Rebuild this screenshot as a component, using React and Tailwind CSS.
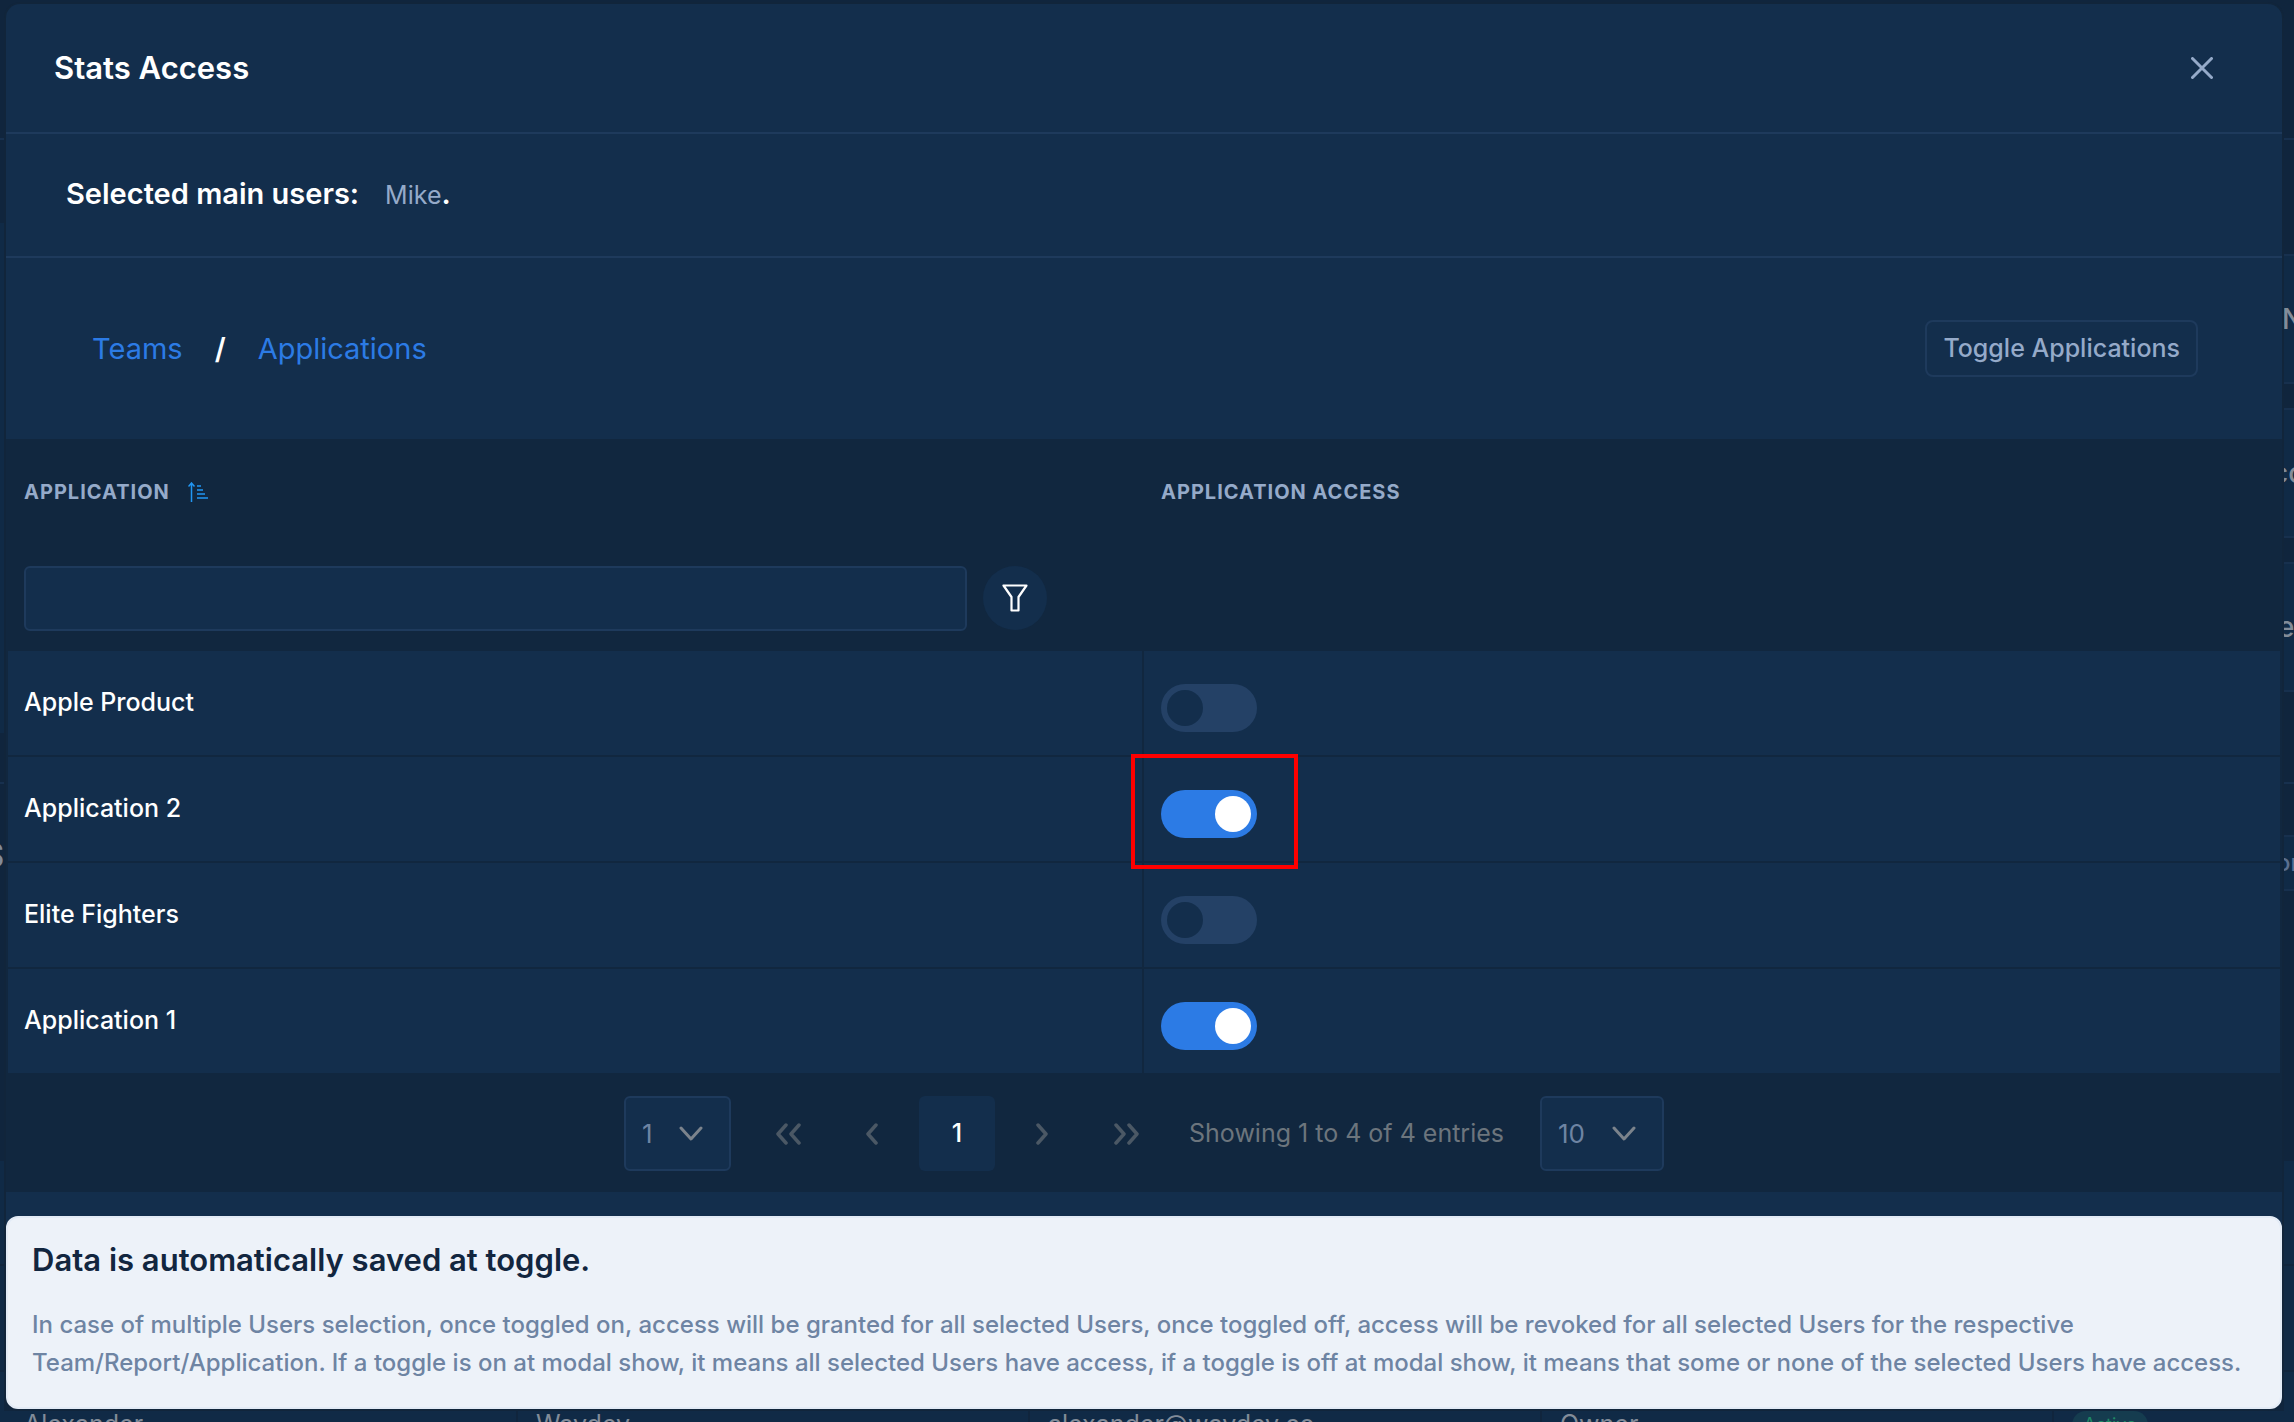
import React, { useState } from 'react';

const applications = [
  { name: 'Apple Product', access: false },
  { name: 'Application 2', access: true, highlighted: true },
  { name: 'Elite Fighters', access: false },
  { name: 'Application 1', access: true },
];

function SortIcon() {
  return (
    <svg width="20" height="20" viewBox="0 0 20 20" fill="none" stroke="#2196f3" strokeWidth="1.5">
      <path d="M3.500 20V1M0.500 4.500L3.500 1l3 3.500" />
      <path d="M9 4h4M9 8h6M9 12h8M9 16h11" />
    </svg>
  );
}

function FilterIcon() {
  return (
    <svg width="26" height="28" viewBox="0 0 26 28" fill="none" stroke="#fff" strokeWidth="2.200" strokeLinejoin="round">
      <path d="M1.500 1.500h23L16.500 13v13.500h-7V13z" />
    </svg>
  );
}

function Chevron({ direction, double }) {
  const d = direction === 'left' ? 'M10 2L2 11l8 9' : 'M2 2l8 9-8 9';
  return (
    <svg
      width={double ? 26 : 14}
      height="22"
      viewBox={double ? '0 0 26 22' : '0 0 14 22'}
      fill="none"
      stroke="#4b5865"
      strokeWidth="3.500"
      strokeLinecap="round"
      strokeLinejoin="round"
    >
      <path d={d} />
      {double && <path d={d} transform="translate(13 0)" />}
    </svg>
  );
}

function Switch({ label, checked, onChange }) {
  return (
    <input
      type="checkbox"
      role="switch"
      aria-label={label}
      checked={checked}
      onChange={onChange}
      className="block h-12 w-24 cursor-pointer appearance-none rounded-full bg-[#244166] p-1.5 before:block before:size-9 before:rounded-full before:bg-[#132e4c] checked:bg-[#2c7be5] checked:before:ml-12 checked:before:bg-white"
    />
  );
}

function PageSelect({ label, options, className }) {
  return (
    <div className="relative">
      <select
        aria-label={label}
        className={`h-[75px] appearance-none rounded-md border-2 border-[#1e3a5c] bg-[#132e4c] pl-4 text-[26px] text-[#6e84a3] ${className}`}
      >
        {options.map((option) => (
          <option key={option}>{option}</option>
        ))}
      </select>
      <svg
        className="pointer-events-none absolute top-7 right-7 h-5 w-6"
        viewBox="0 0 24 20"
        fill="none"
        stroke="#7b838c"
        strokeWidth="3"
        strokeLinecap="round"
        strokeLinejoin="round"
      >
        <path d="M2 4l10 11L22 4" />
      </svg>
    </div>
  );
}

// Dimmed users page that stays visible around the modal
function PageBehind() {
  return (
    <div aria-hidden="true" className="absolute inset-0 flex flex-col overflow-hidden bg-[#10253d] text-[#828c99]">
      <div className="flex min-h-0 flex-1 justify-between">
        <div className="flex w-1 flex-col overflow-hidden">
          <div className="h-[140px] border-b-2 border-[#17304e]" />
          <div className="mt-[83px] h-[510px] bg-[#102a46]" />
          <div className="h-[51px] border-b-2 border-[#17304e]" />
          <div className="flex h-[142px] items-center justify-end text-4xl font-bold">S</div>
          <div className="mt-[235px] h-[105px] border-b-2 border-[#10253d] bg-[#102a46]" />
          <div className="h-[106px] border-b-2 border-[#10253d] bg-[#102a46]" />
          <div className="flex-1 bg-[#102a46]" />
        </div>
        <div className="flex w-2.5 flex-col overflow-hidden text-[28px] font-medium">
          <div className="h-[140px] border-b-2 border-[#17304e]" />
          <div className="mt-[114px] flex h-[130px] items-center border-y-2 border-[#17304e] bg-[#102a46]">
            <span className="-ml-0.5">N</span>
          </div>
          <div className="mt-6 flex h-[130px] items-center border-y-2 border-[#17304e] bg-[#102a46]">
            <span className="-ml-3">co</span>
          </div>
          <div className="mt-6 flex h-[130px] items-center border-y-2 border-[#17304e] bg-[#102a46]">
            <span className="-ml-1.5">e</span>
          </div>
          <div className="h-[92px] border-b-2 border-[#17304e]" />
          <div className="mt-[51px] flex h-14 items-center border-y-2 border-[#17304e] bg-[#102a46] text-2xl text-[#5b7090]">
            <span className="-ml-2">or</span>
          </div>
          <div className="mt-[270px] h-[105px] border-b-2 border-[#10253d] bg-[#102a46]" />
          <div className="h-[106px] border-b-2 border-[#10253d] bg-[#102a46]" />
          <div className="flex-1 bg-[#102a46]" />
        </div>
      </div>
      <div className="grid h-[11px] grid-cols-[512px_512px_512px_512px_1fr] overflow-hidden bg-[#102a46] pl-1.5 text-[25px] leading-[26px]">
        <span className="border-r-2 border-[#10253d] pl-[18px]">Alexander</span>
        <span className="border-r-2 border-[#10253d] pl-[18px]">Waydev</span>
        <span className="border-r-2 border-[#10253d] pl-[18px]">alexander@waydev.co</span>
        <span className="border-r-2 border-[#10253d] pl-[18px]">Owner</span>
        <span className="ml-[18px] h-7 w-[76px] rounded-full bg-[#153c4f] text-center text-lg leading-7 text-[#1f8a66]">Active</span>
      </div>
    </div>
  );
}

function App() {
  const [rows, setRows] = useState(applications);

  const toggleRow = (name) => {
    setRows(rows.map((row) => (row.name === name ? { ...row, access: !row.access } : row)));
  };

  const toggleAll = () => {
    const allOn = rows.every((row) => row.access);
    setRows(rows.map((row) => ({ ...row, access: !allOn })));
  };

  return (
    <div className="relative min-h-screen font-['Inter',sans-serif]">
      <PageBehind />
      <div role="dialog" aria-labelledby="modal-title" className="relative pt-1 pr-3 pb-[13px] pl-1.5">
        <div className="rounded-[14px] bg-[#132e4c] ring-2 ring-[#11253b]">
          <header className="flex h-[130px] items-center justify-between border-b-2 border-[#1e3a5c] pr-[69px] pl-12">
            <h1 id="modal-title" className="text-[31px] font-semibold text-white">Stats Access</h1>
            <button aria-label="Close" className="text-[#95aac9]">
              <svg width="22" height="22" viewBox="0 0 22 22" stroke="currentColor" strokeWidth="3" strokeLinecap="round">
                <path d="M1.500 1.500l19 19M20.500 1.500l-19 19" />
              </svg>
            </button>
          </header>

          <div className="flex h-[124px] items-baseline border-b-2 border-[#1e3a5c] pt-[38px] pl-[60px] text-[29px] font-semibold text-white">
            <h2>Selected main users:</h2>
            <p className="ml-[26px]">
              <span className="text-[25px] font-normal text-[#95aac9]">Mike</span>.
            </p>
          </div>

          <div className="flex h-[181px] items-center justify-between pr-[84px] pl-[86px]">
            <nav className="flex items-baseline gap-8 text-[29px] text-[#2c7be5]">
              <a href="#teams">Teams</a>
              <span className="font-semibold text-white">/</span>
              <a href="#applications">Applications</a>
            </nav>
            <button
              onClick={toggleAll}
              className="h-[57px] rounded-lg border-2 border-[#1e3a5c] px-4 text-[25px] font-medium text-[#95aac9]"
            >
              Toggle Applications
            </button>
          </div>

          <div className="bg-[#11273f] px-0.5">
            <table className="w-full table-fixed border-separate border-spacing-0 text-left">
              <thead className="text-xl text-[#95aac9]">
                <tr className="h-[106px]">
                  <th className="w-1/2 pl-4 font-bold tracking-[1px]">
                    <span className="flex items-center gap-[18px]">
                      APPLICATION
                      <SortIcon />
                    </span>
                  </th>
                  <th className="w-1/2 pl-[17px] font-bold tracking-[1px]">APPLICATION ACCESS</th>
                </tr>
                <tr className="h-[106px]">
                  <th className="pt-0 pl-4">
                    <div className="flex items-center gap-4">
                      <input
                        aria-label="Filter applications"
                        className="h-[65px] min-w-0 flex-1 rounded-md border-2 border-[#1e3a5c] bg-[#132e4c] px-4 text-[25px] font-normal text-white"
                      />
                      <button aria-label="Filter" className="mr-[97px] flex size-16 items-center justify-center rounded-full bg-[#132e4c]">
                        <FilterIcon />
                      </button>
                    </div>
                  </th>
                  <td />
                </tr>
              </thead>
              <tbody className="bg-[#132e4c] text-[25px] font-medium text-white">
                {rows.map((row) => (
                  <tr key={row.name} className="h-[106px] *:border-b-2 *:border-[#11273f] last:h-[104px] last:*:border-b-0">
                    <td className="border-r-2 pl-4">{row.name}</td>
                    <td className="relative pt-2.5 pl-[17px]">
                      <Switch label={`${row.name} access`} checked={row.access} onChange={() => toggleRow(row.name)} />
                      {row.highlighted && (
                        <div className="pointer-events-none absolute -top-[3px] -left-[13px] h-[115px] w-[167px] border-4 border-[#ff0000]" />
                      )}
                    </td>
                  </tr>
                ))}
              </tbody>
            </table>
          </div>

          <div className="flex h-[119px] items-center justify-center bg-[#11273f] pt-0.5">
            <PageSelect label="Page" options={['1']} className="w-[107px]" />
            <button aria-label="First page" className="ml-4 flex w-[84px] justify-center"><Chevron direction="left" double /></button>
            <button aria-label="Previous page" className="mr-1 flex w-[84px] justify-center"><Chevron direction="left" /></button>
            <button className="h-[75px] w-[76px] rounded-md bg-[#132e4c] text-[25px] font-medium text-white">1</button>
            <button aria-label="Next page" className="ml-1.5 flex w-[84px] justify-center"><Chevron direction="right" /></button>
            <button aria-label="Last page" className="flex w-[84px] justify-center"><Chevron direction="right" double /></button>
            <p className="mr-9 ml-5 text-[25px] text-[#6c757d]">Showing 1 to 4 of 4 entries</p>
            <PageSelect label="Entries per page" options={['10', '25', '50']} className="w-[124px]" />
          </div>

          <div role="alert" className="mt-6 h-[193px] rounded-xl border-2 border-[#e3ebf6] bg-[#edf2f9] px-6 pt-[22px]">
            <h3 className="text-[31px] leading-10 font-semibold text-[#12263f]">Data is automatically saved at toggle.</h3>
            <p className="mt-[26px] text-2xl leading-[38px] font-medium text-[#6e84a3]">
              In case of multiple Users selection, once toggled on, access will be granted for all selected Users, once toggled off, access will be revoked for all selected Users for the respective Team/Report/Application. If a toggle is on at modal show, it means all selected Users have access, if a toggle is off at modal show, it means that some or none of the selected Users have access.
            </p>
          </div>
        </div>
      </div>
    </div>
  );
}

export default App;
